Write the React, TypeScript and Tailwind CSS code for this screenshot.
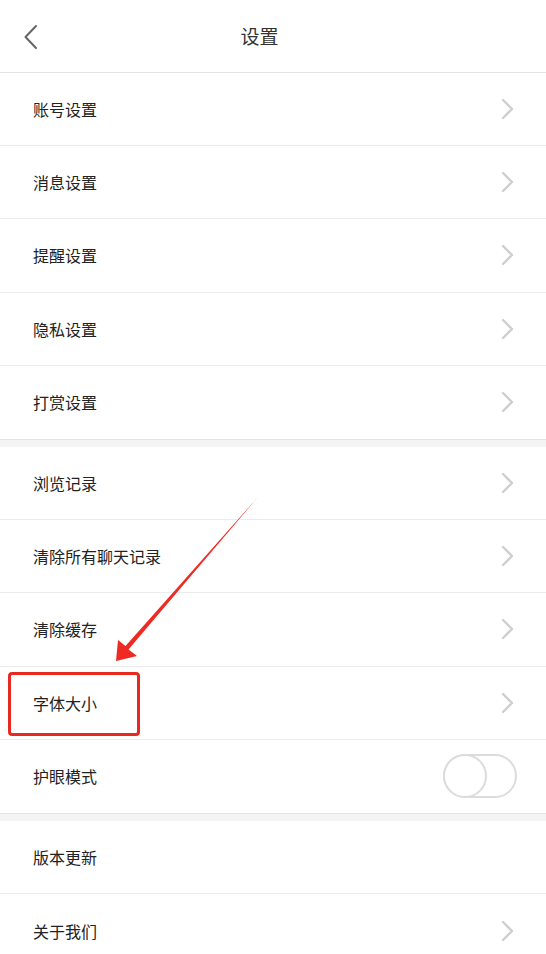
import { ReactNode } from 'react'

const GROUPS: { label: string; right?: 'chevron' | 'switch' | 'none' }[][] = [
  [
    { label: '账号设置' },
    { label: '消息设置' },
    { label: '提醒设置' },
    { label: '隐私设置' },
    { label: '打赏设置' },
  ],
  [
    { label: '浏览记录' },
    { label: '清除所有聊天记录' },
    { label: '清除缓存' },
    { label: '字体大小' },
    { label: '护眼模式', right: 'switch' },
  ],
  [
    { label: '版本更新', right: 'none' },
    { label: '关于我们' },
  ],
]

function Chevron() {
  return (
    <svg width="14" height="22" viewBox="0 0 14 22" className="mr-[31px]">
      <path d="M2 2 L11 11 L2 20" fill="none" stroke="#cfcfcf" strokeWidth="2.4" strokeLinecap="round" strokeLinejoin="round" />
    </svg>
  )
}

function Switch() {
  return (
    <div className="mr-[29px] flex h-[44px] w-[74px] items-center rounded-full border-2 border-[#dcdcdc] bg-white">
      <div className="-ml-[2px] h-[44px] w-[44px] rounded-full border-2 border-[#dcdcdc] bg-white" />
    </div>
  )
}

function Row({ label, right = 'chevron', last }: { label: string; right?: string; last: boolean }) {
  let tail: ReactNode = null
  if (right === 'chevron') tail = <Chevron />
  if (right === 'switch') tail = <Switch />
  return (
    <div className={`flex h-[73.2px] items-center justify-between bg-white ${last ? '' : 'border-b border-[#ececec]'}`}>
      <span className="pl-[33px] text-[16px] text-[#222]">{label}</span>
      {tail}
    </div>
  )
}

export default function App() {
  return (
    <div className="relative h-[954px] w-[546px] overflow-hidden bg-white font-['Noto_Sans_CJK_SC','Noto_Sans',sans-serif]">
      {/* Header */}
      <div className="relative flex h-[73px] items-center justify-center border-b border-[#e3e3e3]">
        <svg width="16" height="26" viewBox="0 0 16 26" className="absolute left-[23px] top-[24px]">
          <path d="M13 2 L2.5 13 L13 24" fill="none" stroke="#666" strokeWidth="2" strokeLinecap="round" strokeLinejoin="round" />
        </svg>
        <h1 className="mr-[27px] text-[19px] text-[#333]">设置</h1>
      </div>

      {GROUPS.map((group, gi) => (
        <div key={gi}>
          {gi > 0 && <div className="h-[8px] border-t border-[#e3e3e3] bg-[#f4f4f4]" />}
          {group.map((item, i) => (
            <Row key={item.label} label={item.label} right={item.right} last={i === group.length - 1} />
          ))}
        </div>
      ))}

      {/* Annotation: red box and arrow */}
      <div className="absolute left-[8px] top-[672px] h-[64px] w-[132px] rounded-[4px] border-[3px] border-[#e8291f]" />
      <svg className="absolute left-0 top-0" width="546" height="954" viewBox="0 0 546 954">
        <polygon
          points="116,661 118,640 125.5,646 258,497 128.5,649.5 137,656"
          fill="#ee2a22"
        />
      </svg>
    </div>
  )
}
